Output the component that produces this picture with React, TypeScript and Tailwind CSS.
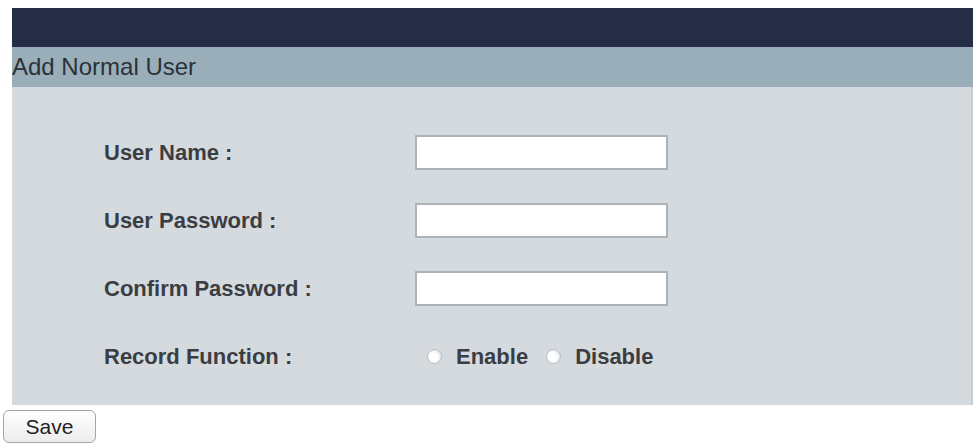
const rows = [
  { id: 1, label: 'User Name :', type: 'text' },
  { id: 2, label: 'User Password :', type: 'password' },
  { id: 3, label: 'Confirm Password :', type: 'password' },
]

function Radio({ label }: { label: string }) {
  return (
    <label className="flex items-center">
      <span className="h-[15px] w-[15px] rounded-full border border-[#b9bec6] bg-[radial-gradient(circle_at_40%_55%,#ffffff_40%,#e6e9ed_70%,#c3c8cf_100%)]" />
      <span className="ml-[14px] text-[22px] font-bold text-[#3a3d42]">{label}</span>
    </label>
  )
}

export default function App() {
  return (
    <div className="min-h-screen bg-white pt-[8px] font-['Liberation_Sans',Arial,sans-serif]">
      <div className="ml-[12px]">
        <div className="h-[39px] bg-[#262e47]" />
        <div className="flex h-[40px] items-center bg-[#99aeb8] text-[24px] leading-none text-[#2b3138]">
          Add Normal User
        </div>

        <div className="h-[318px] border-r-2 border-[#c9ced4] bg-[#d5dadf] pl-[92px] pt-[31px]">
          {rows.map((row) => (
            <div className="flex h-[68px] items-center" key={row.id}>
              <div className="w-[311px] text-[22px] font-bold text-[#3a3d42]">{row.label}</div>
              <input
                type={row.type}
                className="h-[35px] w-[253px] border-2 border-[#aeb2b9] bg-white outline-none"
              />
            </div>
          ))}

          <div className="flex h-[68px] items-center">
            <div className="w-[311px] text-[22px] font-bold text-[#3a3d42]">Record Function :</div>
            <div className="ml-[12px] flex items-center gap-[18px]">
              <Radio label="Enable" />
              <Radio label="Disable" />
            </div>
          </div>
        </div>
      </div>

      <button className="ml-[3px] mt-[5px] h-[33px] w-[93px] rounded-[6px] border border-[#a3a6ab] bg-[linear-gradient(#ffffff,#ececec)] text-[21px] leading-none text-[#222]">
        Save
      </button>
    </div>
  )
}
